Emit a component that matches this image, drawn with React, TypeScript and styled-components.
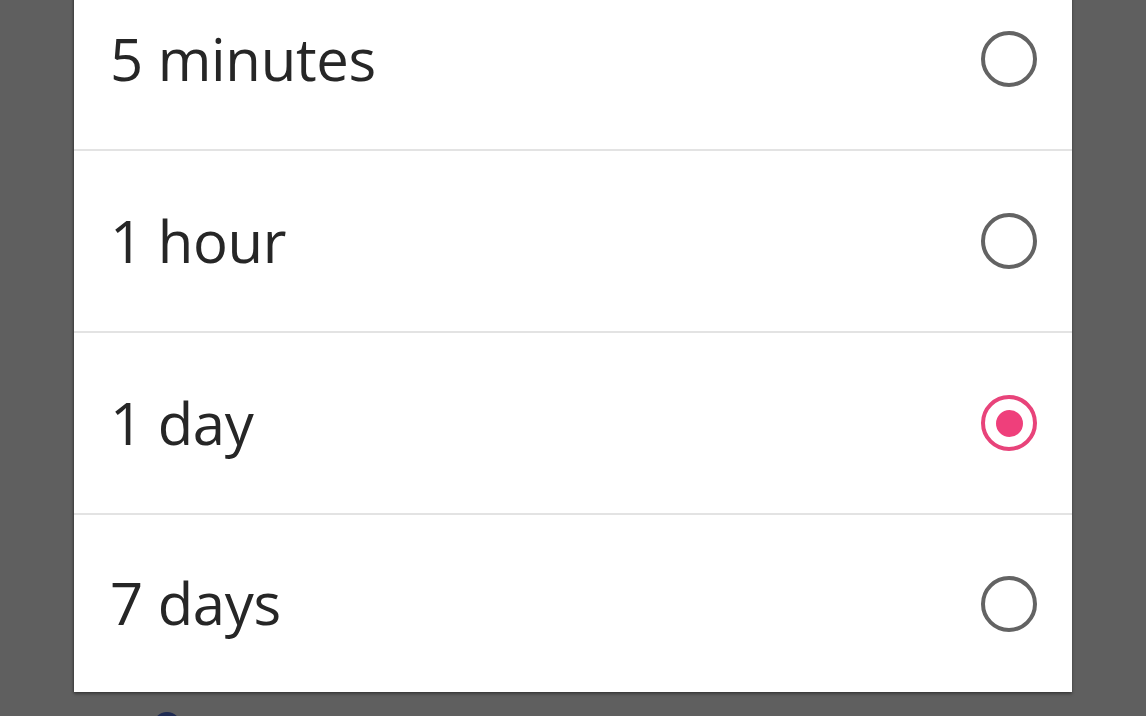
import React, { useState } from "react"
import styled, { createGlobalStyle } from "styled-components"

const GlobalStyle = createGlobalStyle`
  html, body {
    margin: 0;
    padding: 0;
    background: #5f5f5f;
    overflow: hidden;
  }
`

const Page = styled.div`
  width: 1146px;
  height: 716px;
  overflow: hidden;
  background: #5f5f5f;
`

const Sheet = styled.div`
  margin: -31px 0 0 74px;
  width: 998px;
  background: #ffffff;
  box-shadow: 0 2px 3px rgba(0, 0, 0, 0.35), -1px 0 2px rgba(0, 0, 0, 0.25);
`

const Option = styled.label<{ $last?: boolean }>`
  display: flex;
  align-items: center;
  justify-content: space-between;
  height: ${(p) => (p.$last ? "177px" : "180px")};
  padding: 0 35px 0 36px;
  border-bottom: ${(p) => (p.$last ? "none" : "2px solid #e3e3e3")};
  cursor: pointer;
`

const OptionText = styled.span`
  font-family: "Open Sans", "Noto Sans", sans-serif;
  font-size: 58px;
  color: #262626;
  letter-spacing: -0.3px;
  margin-top: -2px;
`

const Radio = styled.span<{ $checked: boolean }>`
  box-sizing: border-box;
  width: 56px;
  height: 56px;
  border-radius: 50%;
  border: 4px solid ${(p) => (p.$checked ? "#e8437a" : "#636363")};
  display: flex;
  align-items: center;
  justify-content: center;

  &::after {
    content: "";
    width: 27px;
    height: 27px;
    border-radius: 50%;
    background: #ef3f7b;
    display: ${(p) => (p.$checked ? "block" : "none")};
  }
`

const Behind = styled.div`
  display: flex;
  padding: 20px 0 0 153px;
`

const Avatar = styled.div`
  width: 28px;
  height: 28px;
  border-radius: 50%;
  background: #1f2b52;
`

const options = ["5 minutes", "1 hour", "1 day", "7 days"]

const App = () => {
  const [selected, setSelected] = useState("1 day")

  return (
    <Page>
      <GlobalStyle />
      <Sheet>
        {options.map((o, i) => (
          <Option key={o} $last={i === options.length - 1} onClick={() => setSelected(o)}>
            <OptionText>{o}</OptionText>
            <Radio $checked={selected === o} />
          </Option>
        ))}
      </Sheet>
      <Behind>
        <Avatar />
      </Behind>
    </Page>
  )
}

export default App
